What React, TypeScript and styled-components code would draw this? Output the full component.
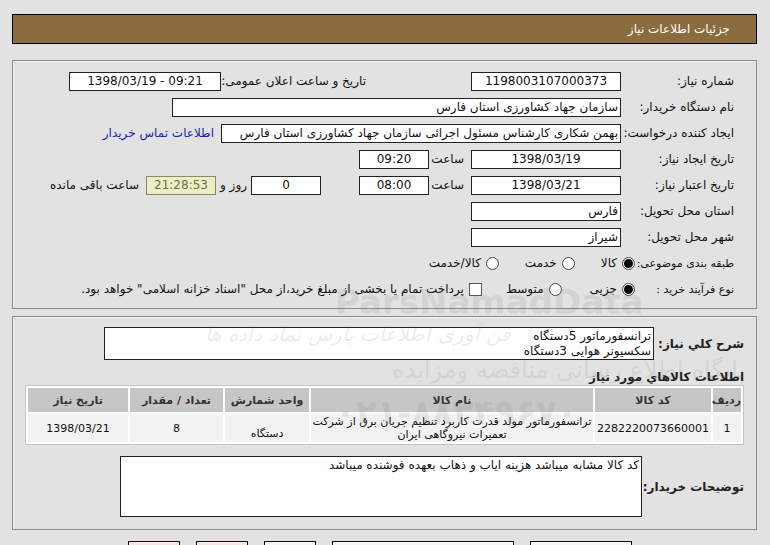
import React from 'react'
import styled, { createGlobalStyle } from 'styled-components'

const GlobalStyle = createGlobalStyle`
  html, body {
    margin: 0;
    padding: 0;
    background: #e2e2e2;
  }
  body {
    direction: rtl;
    font-family: Tahoma, 'DejaVu Sans', sans-serif;
    font-size: 12px;
    color: #111;
  }
`

function App(): JSX.Element {
  return (
    <Page>
      <GlobalStyle />
      <TitleBar>جزئیات اطلاعات نیاز</TitleBar>

      <Panel $pad="10px 22px 9px 0">
        <Rows>
          <Row>
            <Label $w={113}>شماره نیاز:</Label>
            <Field $w={150} $align="center">1198003107000373</Field>
            <Label $w={145} $gap={105}>تاریخ و ساعت اعلان عمومی:</Label>
            <Field $w={152} $align="center" $ltr>
              1398/03/19 - 09:21
            </Field>
          </Row>
          <Row>
            <Label $w={113}>نام دستگاه خریدار:</Label>
            <Field $w={449}>سازمان جهاد کشاورزی استان فارس</Field>
          </Row>
          <Row>
            <Label $w={113}>ایجاد کننده درخواست:</Label>
            <Field $w={400}>بهمن شکاری کارشناس مسئول اجرائی سازمان جهاد کشاورزی استان فارس</Field>
            <Link $gap={7}>اطلاعات تماس خریدار</Link>
          </Row>
          <Row>
            <Label $w={113}>تاریخ ایجاد نیاز:</Label>
            <Field $w={150} $align="center">1398/03/19</Field>
            <Word $w={32} $gap={7}>ساعت</Word>
            <Field $w={70} $gap={3} $align="center">09:20</Field>
          </Row>
          <Row>
            <Label $w={113}>تاریخ اعتبار نیاز:</Label>
            <Field $w={150} $align="center">1398/03/21</Field>
            <Word $w={32} $gap={7}>ساعت</Word>
            <Field $w={70} $gap={3} $align="center">08:00</Field>
            <Field $w={70} $gap={38} $align="center">0</Field>
            <Word $w={23} $gap={4}>روز و</Word>
            <Field $w={70} $gap={8} $align="center" $tone="timer">21:28:53</Field>
            <Word $gap={7}>ساعت باقی مانده</Word>
          </Row>
          <Row>
            <Label $w={113}>استان محل تحویل:</Label>
            <Field $w={150}>فارس</Field>
          </Row>
          <Row>
            <Label $w={113}>شهر محل تحویل:</Label>
            <Field $w={150}>شیراز</Field>
          </Row>
          <Row>
            <Label $w={99} $small>طبقه بندی موضوعی:</Label>
            <Option>
              <Radio $checked />
              کالا
            </Option>
            <Option $gap={26}>
              <Radio />
              خدمت
            </Option>
            <Option $gap={26}>
              <Radio />
              کالا/خدمت
            </Option>
          </Row>
          <Row>
            <Label $w={99} $small>نوع فرآیند خرید :</Label>
            <Option>
              <Radio $checked />
              جزیی
            </Option>
            <Option $gap={28}>
              <Radio />
              متوسط
            </Option>
            <Option $gap={24}>
              <Check />
              پرداخت تمام یا بخشی از مبلغ خرید،از محل "اسناد خزانه اسلامی" خواهد بود.
            </Option>
          </Row>
        </Rows>
      </Panel>

      <Panel $pad="10px 12px 12px 0" $gap={7}>
        <Row $h={33}>
          <Label $w={90} $bold>شرح کلي نياز:</Label>
          <Field $w={550} $h={33} $multi>
            ترانسفورماتور 5دستگاه
            <br />
            سکسیونر هوایی 3دستگاه
          </Field>
        </Row>

        <SectionTitle>اطلاعات کالاهاي مورد نياز</SectionTitle>

        <Items>
          <colgroup>
            <col style={{ width: 28 }} />
            <col style={{ width: 116 }} />
            <col style={{ width: 282 }} />
            <col style={{ width: 84 }} />
            <col style={{ width: 93 }} />
            <col style={{ width: 100 }} />
          </colgroup>
          <thead>
            <tr>
              <Head>ردیف</Head>
              <Head>کد کالا</Head>
              <Head>نام کالا</Head>
              <Head>واحد شمارش</Head>
              <Head>تعداد / مقدار</Head>
              <Head>تاریخ نیاز</Head>
            </tr>
          </thead>
          <tbody>
            <tr>
              <Cell>1</Cell>
              <Cell>2282220073660001</Cell>
              <Cell>
                ترانسفورماتور مولد قدرت کاربرد تنظیم جریان برق از شرکت
                <br />
                تعمیرات نیروگاهی ایران
              </Cell>
              <Cell $low>دستگاه</Cell>
              <Cell>8</Cell>
              <Cell>1398/03/21</Cell>
            </tr>
          </tbody>
        </Items>

        <Row $h={61} $top={11}>
          <Label $w={102} $bold>توضیحات خریدار:</Label>
          <Field $w={522} $h={61} $multi>
            کد کالا مشابه میباشد هزینه ایاب و ذهاب بعهده فوشنده میباشد
          </Field>
        </Row>
      </Panel>

      <Buttons>
        <Button $w={100} />
        <Button $w={180} />
        <Button $w={50} />
        <Button $w={50} $tone="pink" />
        <Button $w={50} $tone="pink" />
      </Buttons>

      <Watermark>
        <MarkLine $size={20} $top={322} $left={205} $italic>
          فن آوری اطلاعات پارس نماد داده ها
        </MarkLine>
        <MarkLine $size={34} $top={282} $left={335} $bold>
          ParsNamadData
        </MarkLine>
        <MarkLine $size={24} $top={356} $left={392}>
          پایگاه اطلاع رسانی مناقصه ومزایده
        </MarkLine>
        <MarkLine $size={34} $top={392} $left={335} $bold>
          ۰۲۱-۸۸۳۴۹۶۷۰
        </MarkLine>
      </Watermark>
    </Page>
  )
}

const Page = styled.div`
  position: relative;
  padding: 14px 13px 0 12px;
`

const TitleBar = styled.div`
  height: 28px;
  display: flex;
  align-items: center;
  padding-right: 26px;
  background: #8b6c3f;
  border: 1px solid #000;
  color: #fff;
  font-size: 12px;
`

const Panel = styled.div<{ $pad: string; $gap?: number }>`
  margin-top: ${(p) => p.$gap ?? 16}px;
  padding: ${(p) => p.$pad};
  border: 1px solid #8a8a8a;
  box-shadow: inset 1px 1px 0 #f2f2f2;
`

const Rows = styled.div`
  display: flex;
  flex-direction: column;
  gap: 6px;
`

const Row = styled.div<{ $h?: number; $top?: number }>`
  display: flex;
  align-items: center;
  height: ${(p) => p.$h ?? 20}px;
  margin-top: ${(p) => p.$top ?? 0}px;
`

const Label = styled.div<{ $w: number; $gap?: number; $bold?: boolean; $small?: boolean }>`
  width: ${(p) => p.$w}px;
  flex-shrink: 0;
  margin-right: ${(p) => p.$gap ?? 0}px;
  white-space: nowrap;
  font-weight: ${(p) => (p.$bold ? 700 : 400)};
  font-size: ${(p) => (p.$small ? 11 : 12)}px;
  color: ${(p) => (p.$bold ? '#222' : '#111')};
`

const Field = styled.div<{
  $w: number
  $h?: number
  $gap?: number
  $align?: 'center' | 'right'
  $tone?: 'timer'
  $multi?: boolean
  $ltr?: boolean
}>`
  box-sizing: border-box;
  width: ${(p) => p.$w}px;
  height: ${(p) => p.$h ?? 19}px;
  flex-shrink: 0;
  margin-right: ${(p) => p.$gap ?? 0}px;
  padding: ${(p) => (p.$multi ? '1px 2px' : '0 2px')};
  align-self: ${(p) => (p.$multi ? 'stretch' : 'center')};
  display: ${(p) => (p.$multi ? 'block' : 'flex')};
  direction: ${(p) => (p.$ltr ? 'ltr' : 'rtl')};
  align-items: center;
  justify-content: ${(p) => (p.$align === 'center' ? 'center' : 'flex-start')};
  background: ${(p) => (p.$tone === 'timer' ? '#eeeec6' : '#fff')};
  color: ${(p) => (p.$tone === 'timer' ? '#6e6e4c' : '#111')};
  border: 1px solid ${(p) => (p.$tone === 'timer' ? '#8a8a6a' : '#222')};
  font-size: 12px;
  line-height: 15px;
  white-space: nowrap;
  overflow: hidden;
`

const Word = styled.span<{ $w?: number; $gap?: number }>`
  width: ${(p) => (p.$w ? `${p.$w}px` : 'auto')};
  flex-shrink: 0;
  margin-right: ${(p) => p.$gap ?? 0}px;
  white-space: nowrap;
`

const Link = styled.span<{ $gap?: number }>`
  margin-right: ${(p) => p.$gap ?? 0}px;
  color: #1f22a8;
  white-space: nowrap;
`

const Option = styled.label<{ $gap?: number }>`
  display: flex;
  align-items: center;
  gap: 5px;
  margin-right: ${(p) => p.$gap ?? 0}px;
  white-space: nowrap;
`

const Radio = styled.span<{ $checked?: boolean }>`
  box-sizing: border-box;
  width: 13px;
  height: 13px;
  border-radius: 50%;
  border: 1px solid #444;
  background: #fff;
  display: flex;
  align-items: center;
  justify-content: center;
  &::after {
    content: '';
    width: 9px;
    height: 9px;
    border-radius: 50%;
    background: ${(p) => (p.$checked ? '#000' : 'transparent')};
  }
`

const Check = styled.span`
  box-sizing: border-box;
  width: 13px;
  height: 13px;
  border: 1px solid #555;
  background: #fff;
`

const SectionTitle = styled.div`
  margin-top: 9px;
  font-weight: 700;
  font-size: 12px;
  line-height: 16px;
  color: #222;
`

const Items = styled.table`
  margin: 0 0 0 auto;
  width: 719px;
  table-layout: fixed;
  border-collapse: separate;
  border-spacing: 2px;
  background: #fff;
  border: 1px solid #c4c4c4;
`

const Head = styled.th`
  height: 24px;
  padding: 0;
  background: #c6c6c6;
  color: #333;
  font-size: 11px;
  font-weight: 700;
  text-align: center;
`

const Cell = styled.td<{ $low?: boolean }>`
  height: 26px;
  padding: 0 0 ${(p) => (p.$low ? 2 : 0)}px;
  vertical-align: ${(p) => (p.$low ? 'bottom' : 'middle')};
  background: #f2f2f2;
  text-align: center;
  font-size: 11px;
  line-height: 13px;
  color: #111;
  white-space: nowrap;
  overflow: hidden;
`

const Buttons = styled.div`
  display: flex;
  gap: 16px;
  padding-right: 125px;
  margin-top: 11px;
`

const Button = styled.div<{ $w: number; $tone?: 'pink' }>`
  width: ${(p) => p.$w}px;
  height: 24px;
  border: 1px solid #111;
  background: ${(p) => (p.$tone === 'pink' ? '#fbe6e6' : '#f8f8f8')};
`

const Watermark = styled.div`
  position: absolute;
  inset: 0;
  pointer-events: none;
  overflow: hidden;
`

const MarkLine = styled.div<{
  $size: number
  $top: number
  $left: number
  $bold?: boolean
  $italic?: boolean
}>`
  position: absolute;
  top: ${(p) => p.$top}px;
  left: ${(p) => p.$left}px;
  direction: ltr;
  font-size: ${(p) => p.$size}px;
  font-weight: ${(p) => (p.$bold ? 700 : 400)};
  font-style: ${(p) => (p.$italic ? 'italic' : 'normal')};
  color: rgba(110, 110, 110, 0.14);
  white-space: nowrap;
`

export default App
